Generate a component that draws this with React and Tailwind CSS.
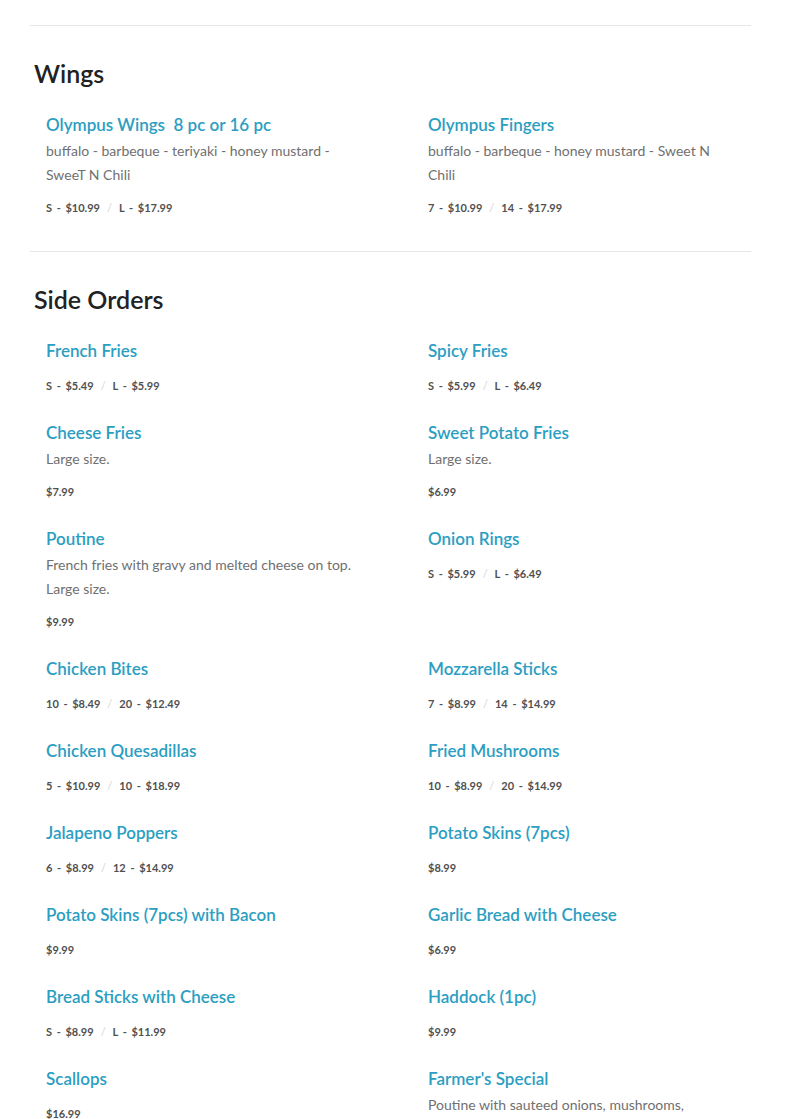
import React from 'react';

const wings = [
    {
        name: 'Olympus Wings  8 pc or 16 pc',
        desc: 'buffalo - barbeque - teriyaki - honey mustard - SweeT N Chili',
        prices: ['S - $10.99', 'L - $17.99'],
    },
    {
        name: 'Olympus Fingers',
        desc: 'buffalo - barbeque - honey mustard - Sweet N Chili',
        prices: ['7 - $10.99', '14 - $17.99'],
    },
];

const sides = [
    { name: 'French Fries', prices: ['S - $5.49', 'L - $5.99'] },
    { name: 'Spicy Fries', prices: ['S - $5.99', 'L - $6.49'] },
    { name: 'Cheese Fries', desc: 'Large size.', prices: ['$7.99'] },
    { name: 'Sweet Potato Fries', desc: 'Large size.', prices: ['$6.99'] },
    { name: 'Poutine', desc: 'French fries with gravy and melted cheese on top. Large size.', prices: ['$9.99'] },
    { name: 'Onion Rings', prices: ['S - $5.99', 'L - $6.49'] },
    { name: 'Chicken Bites', prices: ['10 - $8.49', '20 - $12.49'] },
    { name: 'Mozzarella Sticks', prices: ['7 - $8.99', '14 - $14.99'] },
    { name: 'Chicken Quesadillas', prices: ['5 - $10.99', '10 - $18.99'] },
    { name: 'Fried Mushrooms', prices: ['10 - $8.99', '20 - $14.99'] },
    { name: 'Jalapeno Poppers', prices: ['6 - $8.99', '12 - $14.99'] },
    { name: 'Potato Skins (7pcs)', prices: ['$8.99'] },
    { name: 'Potato Skins (7pcs) with Bacon', prices: ['$9.99'] },
    { name: 'Garlic Bread with Cheese', prices: ['$6.99'] },
    { name: 'Bread Sticks with Cheese', prices: ['S - $8.99', 'L - $11.99'] },
    { name: 'Haddock (1pc)', prices: ['$9.99'] },
    { name: 'Scallops', prices: ['$16.99'] },
    { name: "Farmer's Special", desc: 'Poutine with sauteed onions, mushrooms,', prices: [] },
];

// price line sits a bit lower when there is no description
const MenuItem = ({ item }) => (
    <div>
        <h3 className="text-[17px] leading-[24px] font-semibold text-[#2b9ec2] mb-[2px] whitespace-pre">{item.name}</h3>
        {item.desc && (
            <p className="text-[14px] leading-[24px] text-[#707070] font-normal">{item.desc}</p>
        )}
        {item.prices.length > 0 && (
            <div className={`${item.desc ? 'mt-[12px]' : 'mt-[14px]'} text-[11px] leading-[18px] font-bold text-[#505050] flex items-center whitespace-pre [word-spacing:2px]`}>
                {item.prices.map((p, i) => (
                    <React.Fragment key={p}>
                        {i > 0 && <span className="mx-[7px] font-normal text-[#d4d4d4]">/</span>}
                        <span>{p}</span>
                    </React.Fragment>
                ))}
            </div>
        )}
    </div>
);

const Section = ({ title, items }) => (
    <section className="border-t border-[#e6e6e6] pt-[31px] pb-[34px]">
        <h2 className="px-[4px] text-[25px] leading-[32px] font-semibold text-[#222]">{title}</h2>
        <div className="mt-[24px] px-[16px] grid grid-cols-[316px_1fr] gap-x-[66px] gap-y-[26px]">
            {items.map((item) => (
                <MenuItem key={item.name} item={item} />
            ))}
        </div>
    </section>
);

export default function App() {
    return (
        <div className="min-h-screen bg-white pt-[25px]" style={{ fontFamily: 'Lato, "Open Sans", sans-serif' }}>
            <div className="mx-[30px] w-[721px]">
                <Section title="Wings" items={wings} />
                <Section title="Side Orders" items={sides} />
            </div>
        </div>
    );
}
